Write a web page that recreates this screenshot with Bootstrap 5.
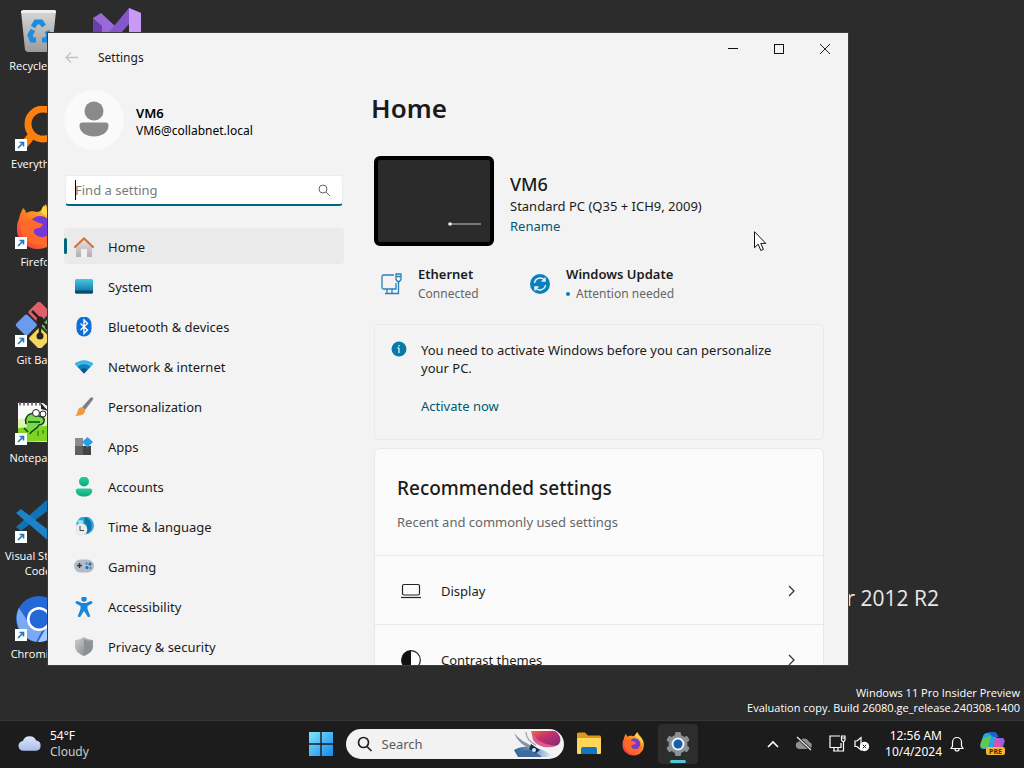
<!DOCTYPE html>
<html lang="en">
<head>
<meta charset="utf-8">
<meta name="viewport" content="width=device-width, initial-scale=1">
<title>Settings</title>
<link href="https://cdn.jsdelivr.net/npm/bootstrap@5.3.0/dist/css/bootstrap.min.css" rel="stylesheet">
<style>
  :root { --accent: #00667f; --ink: #1b1b1b; --muted-ink: #666; }
  body { font-family: "Noto Sans", "Open Sans", sans-serif; font-size: 13px; line-height: 18px; color: var(--ink); background: #2b2b2b; }
  svg { display: block; flex: none; }
  .desk { background: #2c2c2c; min-height: 0; }
  .shortcuts { position: absolute; inset: 0; display: grid; grid-template-columns: 76px 76px; grid-auto-rows: 98px; padding-top: 8px; column-gap: 3px; }
  .shortcut { color: #fff; font-family: "Open Sans", "Noto Sans", sans-serif; font-size: 11px; line-height: 15px; text-align: center; text-decoration: none; }
  .shortcut svg { margin: 0 auto 4px; width: 48px; height: 46px; }
  .brand-text { position: absolute; right: 85px; bottom: 105px; color: #e8e8e8; font: 400 21px/34px "Open Sans", sans-serif; }
  .stamp { position: absolute; right: 4px; bottom: 5px; color: #fff; font: 11px/15px "Open Sans", sans-serif; }
  .pointer { position: absolute; left: 754px; top: 231px; }

  .app-window { position: absolute; inset: 33px 176px 55px 48px; background: #f3f3f3; overflow: hidden; box-shadow: 0 0 0 1px #3d3d3d; }
  .title-row { height: 37px; }
  .title-row .back { padding: 0; border: 0; margin: 18px 0 0 17px; width: 14px; color: #c4c4c4; }
  .title-row .caption { margin: 16px 0 0 19px; font-size: 12px; }
  .win-btn { width: 46px; height: 32px; border: 0; background: none; padding: 0; display: flex; align-items: center; justify-content: center; }
  .panes { min-height: 0; }
  .side { width: 296px; padding-left: 16px; flex: none; }
  .avatar { width: 60px; height: 60px; border-radius: 50%; background: #fafafa; }
  .user { margin-top: 20px; gap: 12px; }
  .user-names { padding-top: 4px; }
  .user strong { font-size: 13px; font-weight: 600; color: #000; }
  .user span { font-size: 12px; line-height: 18px; color: #000; }
  .find { margin: 25px 1px 0 1px; background: #fff; border-radius: 4px; border: 1px solid #ececec; border-bottom: 2px solid var(--accent); height: 31px; }
  .find input { border: 0; background: none; outline: 0; padding: 0 0 0 9px; font-size: 13px; color: var(--ink); }
  .find input::placeholder { color: #7b7b7b; }
  .find .caret { position: absolute; left: 9px; top: 4px; width: 1px; height: 20px; background: #000; }
  .side-nav { margin-top: 22px; gap: 4px; }
  .side-nav a { position: relative; display: flex; align-items: center; gap: 14px; height: 36px; padding: 2px 0 0 10px; border-radius: 4px; color: var(--ink); text-decoration: none; flex: none; }
  .side-nav a.active { background: #eaeaea; }
  .side-nav a.active::before { content: ""; position: absolute; left: 0; top: 10px; width: 3px; height: 16px; border-radius: 2px; background: var(--accent); }
  .side-nav svg { width: 20px; height: 20px; }

  .content { padding: 20px 24px 0 30px; min-width: 0; }
  .content h1 { font-size: 26px; line-height: 36px; font-weight: 600; margin: 0 0 30px -3px; }
  .pc { width: 120px; height: 90px; border: 4px solid #000; border-radius: 6px; background: #2b2b2b; }
  .pc-info { padding-top: 6px; line-height: 20px; }
  .pc-name { font-size: 18px; line-height: 24px; font-weight: 500; margin: 0; }
  a.accent { color: #005a70; text-decoration: none; }
  .status-title { font-size: 13px; line-height: 20px; font-weight: 600; }
  .status-note { font-size: 12px; line-height: 20px; color: var(--muted-ink); }
  .status-row { margin-top: 18px; }
  .status-left { width: 148px; padding-left: 7px; }
  .notice { margin-top: 20px; border: 1px solid #eaeaea; border-radius: 5px; background: #f4f4f4; padding: 16px 40px 24px 16px; gap: 14px; }
  .panel { margin-top: 8px; border: 1px solid #e8e8e8; border-radius: 6px; background: #fbfbfb; flex: none; }
  .panel-head { padding: 26px 22px 24px; color: var(--muted-ink); }
  .panel-head h2 { font-size: 19px; line-height: 26px; font-weight: 500; margin: 0 0 12px; color: var(--ink); }
  .panel-line { display: flex; align-items: center; height: 69px; border-top: 1px solid #e8e8e8; padding: 2px 27px 0 26px; color: var(--ink); text-decoration: none; }
  .panel-line span { margin-left: 20px; }

  .taskbar { height: 48px; background: #1c1c1c; border-top: 1px solid #363636; color: #fff; flex: none; padding-bottom: 2px; }
  .taskbar .wing { flex: 1 1 0; min-width: 0; }
  .taskbar button { background: none; border: 0; padding: 0; color: #fff; }
  .weather { font-size: 12px; line-height: 16px; margin-left: 18px; }
  .weather small { font-size: 12px; color: #ccc; }
  .task-search { width: 218px; height: 30px; border-radius: 15px; background: #f2f2f2; margin-left: 13px; overflow: hidden; }
  .task-search input { border: 0; background: none; outline: 0; width: 130px; padding: 0; margin-left: 8px; font-size: 13px; }
  .task-search input::placeholder { color: #5a5a5a; }
  .taskbar .current { width: 40px; height: 40px; border-radius: 4px; background: #2d2d2d; margin-left: 12px; display: flex; flex-direction: column; align-items: center; padding-top: 8px; }
  .tray { gap: 8px; padding-right: 18px; }
  .taskbar .clock { font-size: 12px; line-height: 16px; text-align: right; margin-left: 7px; }
</style>
</head>
<body>
<svg width="0" height="0" class="position-absolute" aria-hidden="true">
  <defs>
    <linearGradient id="gBin" x2="0" y2="1"><stop stop-color="#d6d6d6"/><stop offset="1" stop-color="#9b9b9b"/></linearGradient>
    <linearGradient id="gFox" x1="1" x2="0" y2="1"><stop stop-color="#ffe14a"/><stop offset=".45" stop-color="#ff8a1e"/><stop offset="1" stop-color="#f0264f"/></linearGradient>
    <linearGradient id="gTeal" x2="0" y2="1"><stop stop-color="#43c9e6"/><stop offset="1" stop-color="#0d6a9c"/></linearGradient>
    <linearGradient id="gStart" gradientUnits="userSpaceOnUse" x1="0" y1="0" x2="24" y2="24"><stop stop-color="#7fe6fb"/><stop offset="1" stop-color="#1487ee"/></linearGradient>
    <linearGradient id="gGrey" x2="1" y2="1"><stop stop-color="#d0d2d4"/><stop offset="1" stop-color="#74787c"/></linearGradient>
    <linearGradient id="gCloud" x2="0" y2="1"><stop stop-color="#dfe5fb"/><stop offset="1" stop-color="#a9bdea"/></linearGradient>
    <linearGradient id="gGreen" x2="0" y2="1"><stop stop-color="#29cf9e"/><stop offset="1" stop-color="#0ea678"/></linearGradient>
    <linearGradient id="gHouse" x2="0" y2="1"><stop stop-color="#e9e4e4"/><stop offset="1" stop-color="#b4adb2"/></linearGradient>
    <linearGradient id="gBloom" x2="1" y2="1"><stop stop-color="#e8703f"/><stop offset=".4" stop-color="#c92f6c"/><stop offset="1" stop-color="#7a2d78"/></linearGradient>
    <linearGradient id="gWave" x2="1"><stop stop-color="#2b5f92"/><stop offset=".6" stop-color="#7d9fc8"/><stop offset="1" stop-color="#f0eef6"/></linearGradient>
    <g id="arrow"><rect x="1" y="33" width="12" height="12" fill="#fff"/><path d="M4 42l5-5M5.500 36.500H9.500v4" fill="none" stroke="#2277b5" stroke-width="1.600"/></g>
    <g id="fox"><path d="M3 15C4 9 6 7 7 4c2 2 3 3 3 5 4-2 7-2 11-1 4 0 6-4 9-8 1 5 5 7 8 12 4 5 5 12 3 19-3 9-10 14-19 14C11 45 1 37 1 26c0-4 0-8 2-11z" fill="url(#gFox)"/><circle cx="24" cy="23" r="11" fill="#7338d8"/><path d="M5 20c4-5 9-6 14-3 3 2 6 2 8 3-1 4-5 4-8 5-3 2 0 8 7 8 6 0 10-4 10-10 5 9-2 18-13 18C12 41 4 32 5 20z" fill="#ff6a2b"/><path d="M28 1c3 8 12 10 12 23-3-9-8-11-13-14-3-3-1-6 1-9z" fill="#ffd83f"/></g>
  </defs>
</svg>

<div class="d-flex flex-column vh-100 overflow-hidden">
  <main class="desk position-relative flex-grow-1 overflow-hidden">
    <div class="shortcuts">
      <a href="#" class="shortcut" style="grid-area:1/1">
        <svg viewBox="0 0 48 46"><path d="M7 3h35l-4 39-2 2H13l-2-2z" fill="url(#gBin)"/><path d="M7 3l2-1h32l1 1v2H7z" fill="#efefef"/><g fill="none" stroke="#1d8be0" stroke-width="5"><path d="M19 19l3-5h5l3 4M33 23l2 5-3 4h-4M22 32h-4l-2-5 3-5"/></g></svg>Recycle Bin</a>
      <a href="#" class="shortcut" style="grid-area:1/2" aria-label="Visual Studio">
        <svg viewBox="0 0 48 46"><path d="M0 10l8-5 28 26-9 9L0 18z" fill="#9a6bd8"/><path d="M0 10l9 8v12l-9 6z" fill="#6b40ad"/><path d="M11 30L36 0l12 5v36l-12 5V16L18 36z" fill="#8656cc"/><path d="M36 0l12 5v36l-12 5z" fill="#c79af5"/></svg></a>
      <a href="#" class="shortcut" style="grid-area:2/1">
        <svg viewBox="0 0 48 46"><circle cx="29" cy="18" r="15" fill="none" stroke="#ff7f0e" stroke-width="7"/><path d="M19 28L9 40" stroke="#ff7f0e" stroke-width="8"/><use href="#arrow"/></svg>Everything</a>
      <a href="#" class="shortcut" style="grid-area:3/1">
        <svg viewBox="0 0 48 46"><use href="#fox" x="2"/><use href="#arrow"/></svg>Firefox</a>
      <a href="#" class="shortcut" style="grid-area:4/1">
        <svg viewBox="0 0 48 46"><g transform="rotate(45 25 23)"><rect x="8" y="6" width="16" height="16" rx="2" fill="#e0606a"/><rect x="27" y="6" width="16" height="16" rx="2" fill="#6db868"/><rect x="8" y="24" width="16" height="16" rx="2" fill="#6a9bee"/><rect x="27" y="24" width="16" height="16" rx="2" fill="#f4d75e"/></g><path d="M18 9l8 8v18M26 19l8 6" stroke="#2a2020" stroke-width="2.500" fill="none"/><g fill="#2a2020"><circle cx="26" cy="18" r="3.500"/><circle cx="26" cy="34" r="3.500"/><circle cx="34" cy="25" r="3"/></g><use href="#arrow"/></svg>Git Bash</a>
      <a href="#" class="shortcut" style="grid-area:5/1">
        <svg viewBox="0 0 48 46"><path d="M4 3h25l14 10v29H4z" fill="#fafafa"/><path d="M4 26l39-5v20L4 42z" fill="#7fd321"/><path d="M4 19l39-2v8L4 28z" fill="#ddf5ae"/><path d="M5 4h22" stroke="#777" stroke-width="3" stroke-dasharray="2 2"/><path d="M27 3v6l7 2z" fill="#222"/><path d="M12 24c-2-8 5-13 10-9l6 2c4 2 2 8-3 8-3 6-8 5-9 9M14 22h12M10 28l4 4M13 35l-5-1" stroke="#14431c" stroke-width="1.600" fill="#78d94a"/><circle cx="22" cy="13" r="3.500" fill="#fff" stroke="#222"/><circle cx="29" cy="14" r="3" fill="#fff" stroke="#222"/><path d="M24 36v-5M29 34v-4" stroke="#1c6a18"/><use href="#arrow"/></svg>Notepad++</a>
      <a href="#" class="shortcut" style="grid-area:6/1">
        <svg viewBox="0 0 48 46"><path d="M2 29l5 4L40 8V0h-5z" fill="#1072b5"/><path d="M2 15l5-4 35 27v7h-5z" fill="#1c83c8"/><path d="M35 0l11 5v36l-11 5z" fill="#2ba8f0"/><use href="#arrow"/></svg>Visual Studio Code</a>
      <a href="#" class="shortcut" style="grid-area:7/1">
        <svg viewBox="0 0 48 46"><circle cx="25" cy="23" r="23" fill="#2668d6"/><path d="M5 12c-6 13 0 30 17 34l8-15-14-2z" fill="#7baaf5"/><path d="M47 16c4 17-8 30-23 30l8-14 2-16z" fill="#a6c8fb"/><circle cx="25" cy="23" r="12" fill="#fff"/><circle cx="25" cy="23" r="9.500" fill="#2467d6"/><use href="#arrow"/></svg>Chromium</a>
    </div>
    <div class="brand-text text-nowrap">Server 2012 R2</div>
    <div class="stamp text-end">Windows 11 Pro Insider Preview<br>Evaluation copy. Build 26080.ge_release.240308-1400</div>

    <section class="app-window d-flex flex-column" aria-label="Settings">
      <header class="title-row d-flex align-items-start flex-shrink-0">
        <button class="btn back" aria-label="Back"><svg width="13" height="13" viewBox="0 0 13 13" fill="none" stroke="currentColor" stroke-width="1.300"><path d="M13 6.500H1M6 1.500L1 6.500l5 5"/></svg></button>
        <span class="caption">Settings</span>
        <div class="d-flex ms-auto">
          <button class="win-btn" aria-label="Minimize"><svg width="10" height="10"><path d="M0 4.500h10" stroke="#111"/></svg></button>
          <button class="win-btn" aria-label="Maximize"><svg width="10" height="10"><rect x=".5" y=".5" width="9" height="9" fill="none" stroke="#111"/></svg></button>
          <button class="win-btn" aria-label="Close"><svg width="12" height="12"><path d="M1 1l10 10M11 1L1 11" stroke="#222"/></svg></button>
        </div>
      </header>
      <div class="panes d-flex flex-grow-1">
        <aside class="side d-flex flex-column overflow-hidden">
          <div class="user d-flex align-items-center">
            <div class="avatar"><svg width="60" height="60" viewBox="0 0 60 60" fill="#8a8a8a"><circle cx="30" cy="21" r="9.500"/><path d="M18.500 32.500h23a3 3 0 0 1 3 3c0 7-7 11-14.500 11s-14.500-4-14.500-11a3 3 0 0 1 3-3z"/></svg></div>
            <div class="user-names d-flex flex-column"><strong>VM6</strong><span>VM6@collabnet.local</span></div>
          </div>
          <div class="find position-relative d-flex align-items-center flex-shrink-0">
            <input class="flex-grow-1" type="text" placeholder="Find a setting" aria-label="Find a setting"><i class="caret"></i>
            <svg class="me-2" width="18" height="14" viewBox="0 0 18 14" fill="none" stroke="#666"><circle cx="7" cy="6" r="4"/><path d="M10 9l4 4"/></svg>
          </div>
          <nav class="side-nav d-flex flex-column">
            <a href="#" class="active"><svg viewBox="0 0 20 20"><path d="M2 9l8-7 8 7v11h-5v-8H7v8H2z" fill="url(#gHouse)"/><path d="M7 12h6v8H7z" fill="#f1f0f0"/><path d="M1 10l9-8.500L19 10" fill="none" stroke="#d4743b" stroke-width="2.200" stroke-linecap="round"/></svg>Home</a>
            <a href="#"><svg viewBox="0 0 20 20"><rect x="1" y="2" width="18" height="14.500" rx="1.500" fill="url(#gTeal)"/><path d="M1 13.500h18V15a1.500 1.500 0 0 1-1.500 1.500h-15A1.500 1.500 0 0 1 1 15z" fill="#0b4c77"/></svg>System</a>
            <a href="#"><svg viewBox="0 0 20 20"><rect x="2.500" y="-.5" width="15" height="20" rx="7.500" fill="#0f6fd8"/><path d="M6.500 6.500l7 6.500-3.500 3.500V3L13.500 6.500l-7 6.500" fill="none" stroke="#fff" stroke-width="1.400"/></svg>Bluetooth &amp; devices</a>
            <a href="#"><svg viewBox="0 0 20 20"><path d="M.5 7C6 2 14 2 19.500 7L10 16.500z" fill="#39b9e8"/><path d="M3.500 9.800C7 6.500 13 6.500 16.500 9.800L10 16.500z" fill="#167fb8"/><path d="M6.500 12.800c2-2 5-2 7 0L10 16.500z" fill="#0b5580"/></svg>Network &amp; internet</a>
            <a href="#"><svg viewBox="0 0 20 20"><path d="M18.500.5c1 .7.800 1.500.2 2.500L11 13l-3-2.700L16 1.200c.8-.8 1.700-1.200 2.500-.7z" fill="#7e8285"/><path d="M8 10.300l3 2.700c.7 4-4 6.500-10 5.500 2.500-1 2-3 3-5.500s2.500-3 4-2.700z" fill="#ee9a43"/></svg>Personalization</a>
            <a href="#"><svg viewBox="0 0 20 20"><path d="M1 1h8v8H1z" fill="#8b8b8b"/><path d="M1 9h8v9H1z" fill="#606060"/><path d="M9 9h8v9H9z" fill="#444"/><path d="M13.500 0l5.500 5-5.500 5.500L8 5z" fill="#289fe9"/></svg>Apps</a>
            <a href="#"><svg viewBox="0 0 20 20" fill="url(#gGreen)"><circle cx="10" cy="4.500" r="5"/><path d="M4 11.500h12a2.200 2.200 0 0 1 2.200 2.200c0 4-4 5.800-8.200 5.800s-8.200-1.800-8.200-5.800A2.200 2.200 0 0 1 4 11.500z"/></svg>Accounts</a>
            <a href="#"><svg viewBox="0 0 20 20"><circle cx="11" cy="8.500" r="9" fill="#28a9d9"/><path d="M11 0c5 2 8 6 6 13-3 4-6 4-5 0s2-5-2-7z" fill="#1273a9"/><path d="M3 4C6 2 9 3 10 5L6 8z" fill="#8ee0ef"/><circle cx="7" cy="12.500" r="6.300" fill="#e9ecef"/><path d="M6 9v4.500h4" stroke="#444" fill="none"/></svg>Time &amp; language</a>
            <a href="#"><svg viewBox="0 0 20 20"><rect x="0" y="2.500" width="20" height="13" rx="6.500" fill="#b2bcc8"/><path d="M3 8.500h5M5.500 6v5" stroke="#333" stroke-width="1.300"/><g fill="#1d68a9"><circle cx="13" cy="10.500" r="1.500"/><circle cx="16" cy="7" r="1.500"/></g><circle cx="12.500" cy="6.500" r="1.200" fill="#5b8cc0"/><circle cx="16.500" cy="11" r="1.200" fill="#5b8cc0"/></svg>Gaming</a>
            <a href="#"><svg viewBox="0 0 20 20"><circle cx="10" cy="2" r="2.700" fill="#1a86d8"/><path d="M3.500 4L8 6h4l4.500-2a1.500 1.500 0 0 1 1.200 2.700L13.500 9v3l2.500 6.500a1.300 1.300 0 0 1-2.500.9L10 14l-3.500 5.400A1.300 1.300 0 0 1 4 18.500L6.500 12V9L2.300 6.700A1.500 1.500 0 0 1 3.500 4z" fill="#1a86d8"/></svg>Accessibility</a>
            <a href="#"><svg viewBox="0 0 20 20"><path d="M10 0c3 2 6 3 9 3v6c0 5-4 8-9 10-5-2-9-5-9-10V3c3 0 6-1 9-3z" fill="url(#gGrey)"/><path d="M10 2c2.500 1.500 4.500 2.300 7 2.500V9c0 4-3 6.500-7 8z" fill="#8d9194"/></svg>Privacy &amp; security</a>
          </nav>
        </aside>
        <div class="content flex-grow-1 d-flex flex-column overflow-hidden">
          <h1>Home</h1>
          <div class="d-flex gap-3 align-items-center flex-shrink-0">
            <div class="pc flex-shrink-0"><svg width="112" height="82"><rect x="73" y="63" width="30" height="2" fill="#777"/><circle cx="72" cy="64" r="1.800" fill="#eee"/></svg></div>
            <div class="pc-info"><p class="pc-name">VM6</p><div>Standard PC (Q35 + ICH9, 2009)</div><a href="#" class="accent">Rename</a></div>
          </div>
          <div class="status-row d-flex flex-shrink-0">
            <div class="status-left d-flex gap-3 align-items-center">
              <svg width="21" height="22" viewBox="0 0 21 22" fill="none" stroke="#2b7fb8" stroke-width="1.300"><path d="M13 2H2.500A1.500 1.500 0 0 0 1 3.500v11A1.500 1.500 0 0 0 2.500 16H15V10M6 16v4M11 16v4M4 20.500h13.500V9"/><path d="M15 1h5v5.500l-1.500 2h-2L15 6.500zM15 3.500h5"/></svg>
              <div><div class="status-title">Ethernet</div><div class="status-note">Connected</div></div>
            </div>
            <div class="d-flex gap-3 align-items-center ps-2">
              <svg width="20" height="20" viewBox="0 0 20 20"><circle cx="10" cy="10" r="10" fill="#0d7fba"/><path d="M4.500 9a5.700 5.700 0 0 1 10.300-2.500M15.500 11a5.700 5.700 0 0 1-10.300 2.500M15 3.500v3.500h-3.500M5 16.500V13h3.500" fill="none" stroke="#e8f8ff" stroke-width="1.400"/></svg>
              <div><div class="status-title">Windows Update</div><div class="status-note d-flex align-items-center"><svg class="me-1" width="6" height="6"><circle cx="2" cy="3" r="2" fill="#0f7fb5"/></svg>Attention needed</div></div>
            </div>
          </div>
          <div class="notice d-flex flex-shrink-0">
            <svg width="16" height="16" viewBox="0 0 16 16"><circle cx="8" cy="8" r="7.500" fill="#0b7ba5"/><path d="M8 7v5M8 4v1.500M6.500 7H8" stroke="#d6f2fc" stroke-width="1.300"/></svg>
            <div><div class="mb-3 pb-1">You need to activate Windows before you can personalize your PC.</div><a href="#" class="accent">Activate now</a></div>
          </div>
          <section class="panel">
            <div class="panel-head"><h2>Recommended settings</h2><div>Recent and commonly used settings</div></div>
            <a href="#" class="panel-line"><svg width="20" height="16" viewBox="0 0 20 16" fill="none" stroke="#222" stroke-width="1.200"><rect x="1.500" y="1.500" width="17" height="10.500" rx="1.500"/><path d="M0 14.500h20"/></svg><span>Display</span><svg class="ms-auto" width="8" height="12" fill="none" stroke="#333" stroke-width="1.300"><path d="M1 1l5 5-5 5"/></svg></a>
            <a href="#" class="panel-line"><svg width="20" height="20" viewBox="0 0 20 20"><circle cx="10" cy="10" r="9.300" fill="#fff" stroke="#222" stroke-width="1.200"/><path d="M10 .5v19a9.500 9.500 0 0 1 0-19z" fill="#111"/></svg><span>Contrast themes</span><svg class="ms-auto" width="8" height="12" fill="none" stroke="#333" stroke-width="1.300"><path d="M1 1l5 5-5 5"/></svg></a>
          </section>
        </div>
      </div>
    </section>
    <svg class="pointer" width="13" height="21" viewBox="0 0 13 21"><path d="M.5.700v16l3.700-3.500 2.600 6.300 2.600-1.100-2.600-6h5z" fill="#fff" stroke="#111"/></svg>
  </main>

  <footer class="taskbar d-flex align-items-center">
    <div class="wing">
      <button class="weather d-flex align-items-center text-start gap-2">
        <svg width="24" height="17" viewBox="0 0 25 17"><path d="M6 16a5 5 0 0 1-1-10A7.500 7.500 0 0 1 19 5.500 5.300 5.300 0 0 1 19 16z" fill="url(#gCloud)"/></svg>
        <span>54°F<br><small>Cloudy</small></span></button>
    </div>
    <div class="d-flex align-items-center">
      <button aria-label="Start"><svg width="24" height="24" viewBox="0 0 24 24" fill="url(#gStart)"><path d="M0 0h11.300v11.300H0zM12.700 0H24v11.300H12.700zM0 12.700h11.300V24H0zM12.700 12.700H24V24H12.700z"/></svg></button>
      <div class="task-search d-flex align-items-center">
        <svg class="ms-2" width="20" height="18" viewBox="-1 0 20 18" fill="none" stroke="#222" stroke-width="1.700"><circle cx="8.500" cy="7.500" r="5"/><path d="M12 11.500l4.500 4.500"/></svg>
        <input type="search" placeholder="Search" aria-label="Search">
        <svg width="50" height="28" viewBox="0 0 50 28"><path d="M2 20c8-5 22-5 38 5l-4 2H6z" fill="url(#gWave)"/><path d="M6 26c2-7 12-8 20-2l4 3H8z" fill="#3c6b9c"/><path d="M2 3c5 6 10 9 20 14l-4 2C10 15 5 10 2 3z" fill="#8a94a3"/><path d="M14 2c0 6 4 10 10 13" stroke="#a7afbb" stroke-width="1.500" fill="none"/><path d="M19 1h24c6 4 7 10 3 14-8 3-20 1-27-14z" fill="url(#gBloom)"/><path d="M19 1c4 8 10 13 25 15-8 3-18 1-23-6z" fill="#dd5a8c"/><path d="M19 14l9 6-4 3-7-4z" fill="#182b53"/><circle cx="22" cy="20" r="2" fill="#c7eeff"/></svg>
      </div>
      <button class="ms-2 ps-1" aria-label="File Explorer"><svg width="26" height="24" viewBox="0 0 26 24"><path d="M1 2a1.500 1.500 0 0 1 1.500-1.500H9l3 3h11A1.500 1.500 0 0 1 25 5v15H1z" fill="#d99a1c"/><path d="M1 6h24v15a1 1 0 0 1-1 1H2a1 1 0 0 1-1-1z" fill="#ffd65a"/><path d="M5 22v-5a2 2 0 0 1 2-2h12a2 2 0 0 1 2 2v5z" fill="#1474bd"/></svg></button>
      <button class="ms-3 ps-1" aria-label="Firefox"><svg width="24" height="24" viewBox="0 0 46 46"><use href="#fox"/></svg></button>
      <button class="current" aria-label="Settings"><svg width="24" height="24" viewBox="-12 -12 24 24"><g fill="#8b9095"><circle r="9.500"/><rect x="-3" y="-12" width="6" height="24" rx="1.500"/><rect x="-3" y="-12" width="6" height="24" rx="1.500" transform="rotate(60)"/><rect x="-3" y="-12" width="6" height="24" rx="1.500" transform="rotate(120)"/></g><circle r="6.500" fill="#edf2f6"/><circle r="4.500" fill="#1361a8"/></svg><svg class="mt-1" width="16" height="3"><rect width="16" height="3" rx="1.500" fill="#4cc8d6"/></svg></button>
    </div>
    <div class="wing d-flex align-items-center justify-content-end tray">
      <button class="me-2" aria-label="Show hidden icons"><svg width="12" height="8" fill="none" stroke="#fff" stroke-width="1.600"><path d="M1 7l5-5 5 5"/></svg></button>
      <button class="me-2" aria-label="OneDrive"><svg width="18" height="15" viewBox="0 0 18 15"><path d="M4 13a3.800 3.800 0 0 1 0-7.500A5.500 5.500 0 0 1 14 6a3.600 3.600 0 0 1 0 7z" fill="#909090"/><path d="M2 1l14 13" stroke="#1c1c1c" stroke-width="3"/><path d="M2 1l14 13" stroke="#e6e6e6" stroke-width="1.300"/></svg></button>
      <button aria-label="Network"><svg width="17" height="17" viewBox="0 0 17 17" fill="none" stroke="#fff" stroke-width="1.200"><path d="M11 1H1v11.500h11V8M4 16h10.500V7M5 12.500V16M9 12.500V16M12.500 1H16v4l-1 1.500h-1.500l-1-1.500zM12.500 3H16"/></svg></button>
      <button aria-label="Volume muted"><svg width="16" height="16" viewBox="2 0 16 16"><path d="M3 5h2l4-3.500V14L5 10.500H3z" fill="none" stroke="#fff" stroke-width="1.200"/><circle cx="12.500" cy="10.500" r="4.700" fill="#fff"/><path d="M10.800 8.800l3.400 3.400M14.200 8.800l-3.400 3.400" stroke="#222"/></svg></button>
      <button class="clock">12:56 AM<br>10/4/2024</button>
      <button aria-label="Notifications"><svg width="14" height="16" viewBox="0 0 14 16" fill="none" stroke="#fff" stroke-width="1.200"><path d="M2.500 10V6a4.500 4.500 0 0 1 9 0v4l1.500 2.500H1zM5 13a2 2 0 0 0 4 0"/></svg></button>
      <button class="ms-2" aria-label="Copilot"><svg width="26" height="25" viewBox="0 0 26 25"><path d="M7 2h8l2 2-4 14H3c-3 0-3-3-2-6l2-7c1-2 2-3 4-3z" fill="#23a7dc"/><path d="M3 7l8-2-3 12H3c-3 0-3-3-2-6z" fill="#61c757"/><path d="M8 1h6c3 0 3 3 5 5h-6z" fill="#1b62cc"/><path d="M15 7h6c3 0 4 2 3 5l-2 7h-9z" fill="#d851b5"/><path d="M19 7h3c2 0 3 2 2 5l-2 6z" fill="#8c63e7"/><rect x="6" y="16" width="19" height="8" rx="2" fill="#f6b62c"/><text x="15.500" y="22.700" text-anchor="middle" font-size="7" font-weight="700" fill="#3a2b05">PRE</text></svg></button>
    </div>
  </footer>
</div>
<script src="https://cdn.jsdelivr.net/npm/bootstrap@5.3.0/dist/js/bootstrap.bundle.min.js"></script>
</body>
</html>
